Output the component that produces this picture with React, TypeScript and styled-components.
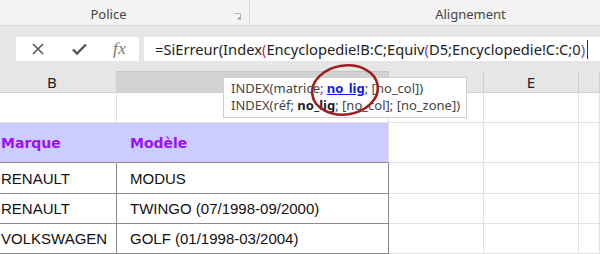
import styled, { createGlobalStyle } from "styled-components";

const GlobalStyle = createGlobalStyle`
  html, body {
    margin: 0;
    padding: 0;
    background: #ffffff;
  }
  body {
    font-family: "Noto Sans", "Open Sans", sans-serif;
  }
`;

const Page = styled.div`
  position: relative;
  width: 600px;
  height: 254px;
  overflow: hidden;
  display: flex;
  flex-direction: column;
`;

const Ribbon = styled.div`
  height: 27px;
  background: #f3f3f3;
  border-bottom: 1px solid #d6d6d6;
  display: grid;
  grid-template-columns: 249px 1px 1fr;
`;

const Group = styled.div<{ $left?: number; $right?: number }>`
  position: relative;
  display: flex;
  align-items: flex-end;
  justify-content: center;
  padding-bottom: 0;
  padding-left: ${(p) => p.$left ?? 0}px;
  padding-right: ${(p) => p.$right ?? 0}px;
  font-size: 13px;
  line-height: 22px;
  color: #444;
`;

const GroupDivider = styled.div`
  background: #d8d8d8;
`;

const Launcher = styled.svg`
  position: absolute;
  right: 7px;
  bottom: 4px;
`;

const FormulaArea = styled.div`
  height: 47px;
  background: #e6e6e6;
  display: flex;
  align-items: flex-start;
  padding: 11px 0 0 16px;
  box-sizing: border-box;
  gap: 5px;
`;

const ButtonBox = styled.div`
  width: 123px;
  height: 24px;
  background: #fff;
  display: flex;
  align-items: center;
  padding-left: 16px;
  gap: 28px;
  box-sizing: border-box;
`;

const FxLabel = styled.span`
  font-family: "Liberation Serif", serif;
  font-style: italic;
  font-size: 17px;
  color: #777;
  letter-spacing: 0.5px;
  margin-left: -2px;
`;

const FormulaInput = styled.div`
  flex: 1;
  height: 24px;
  background: #fff;
  display: flex;
  align-items: center;
  padding-left: 11px;
  font-size: 14.7px;
  color: #222;
  white-space: nowrap;
`;

const Paren = styled.span<{ $c: string }>`
  color: ${(p) => p.$c};
`;

const Caret = styled.span`
  display: inline-block;
  width: 1px;
  height: 19px;
  background: #333;
  margin-left: 2px;
`;

const COLS = "117px 272px 95px 95px 1fr";

const HeaderRow = styled.div`
  display: grid;
  grid-template-columns: ${COLS};
  height: 21px;
  background: #e6e6e6;
  border-bottom: 1px solid #cfcfcf;
`;

const ColHead = styled.div<{ $selected?: boolean; $nudge?: number }>`
  display: flex;
  align-items: center;
  justify-content: center;
  padding-right: ${(p) => p.$nudge ?? 0}px;
  font-size: 15px;
  color: #222;
  background: ${(p) => (p.$selected ? "#d2d2d2" : "transparent")};
  border-right: 1px solid #cdcdcd;
  border-top: ${(p) => (p.$selected ? "1px solid #c4c4c4" : "none")};
`;

const Sheet = styled.div`
  display: grid;
  grid-template-columns: ${COLS};
  grid-template-rows: 30px 40px 31px 30px 30px;
`;

type CellKind = "blank" | "head" | "data";

const Cell = styled.div<{ $kind: CellKind; $edge?: boolean; $first?: boolean }>`
  display: flex;
  align-items: center;
  padding-left: ${(p) => (p.$first ? "1px" : "13px")};
  white-space: nowrap;
  overflow: hidden;
  box-sizing: border-box;
  font-family: ${(p) =>
    p.$kind === "head" ? '"DejaVu Sans", sans-serif' : '"Liberation Sans", Arial, sans-serif'};
  font-size: ${(p) => (p.$kind === "head" ? "14px" : "15px")};
  font-weight: ${(p) => (p.$kind === "head" ? 700 : 400)};
  color: ${(p) => (p.$kind === "head" ? "#9b10ff" : "#111")};
  background: ${(p) => (p.$kind === "head" ? "#ccccff" : "#fff")};
  border-bottom: 1px solid
    ${(p) => (p.$kind === "blank" ? "#e2e2e2" : "#8a8a8a")};
  border-right: 1px solid
    ${(p) =>
      p.$kind === "data" ? "#8a8a8a" : p.$kind === "head" && !p.$edge ? "#ccccff" : "#e2e2e2"};
`;

const Tooltip = styled.div`
  position: absolute;
  left: 223px;
  top: 77px;
  width: 244px;
  height: 41px;
  box-sizing: border-box;
  background: #fff;
  border: 1px solid #d0d0d0;
  padding: 2px 0 0 7px;
  font-size: 13px;
  line-height: 17px;
  color: #444;
  white-space: nowrap;
`;

const ActiveArg = styled.a`
  color: #0b1cf0;
  font-weight: 700;
  text-decoration: underline;
`;

const BoldArg = styled.b`
  color: #222;
`;

const Circle = styled.svg`
  position: absolute;
  left: 308px;
  top: 62px;
  pointer-events: none;
`;

const HEADS = ["B", "C", "D", "E", ""];

const ROWS: [string, string][] = [
  ["RENAULT", "MODUS"],
  ["RENAULT", "TWINGO (07/1998-09/2000)"],
  ["VOLKSWAGEN", "GOLF (01/1998-03/2004)"],
];

function Blanks() {
  return (
    <>
      <Cell $kind="blank" />
      <Cell $kind="blank" />
      <Cell $kind="blank" />
    </>
  );
}

function RowCells({ marque, modele }: { marque: string; modele: string }) {
  return (
    <>
      <Cell $kind="data" $first>{marque}</Cell>
      <Cell $kind="data">{modele}</Cell>
      <Blanks />
    </>
  );
}

export default function App() {
  return (
    <Page>
      <GlobalStyle />
      <Ribbon>
        <Group $right={32}>
          Police
          <Launcher width="8" height="8" viewBox="0 0 8 8">
            <path d="M0.5 0.5h6v6" fill="none" stroke="#b5b5b5" />
            <path d="M3 6.5l3.5-3.5v3.5z" fill="#999" />
          </Launcher>
        </Group>
        <GroupDivider />
        <Group $left={91}>Alignement</Group>
      </Ribbon>

      <FormulaArea>
        <ButtonBox>
          <svg width="12" height="12" viewBox="0 0 12 12">
            <path d="M1 1l10 10M11 1L1 11" stroke="#555" strokeWidth="1.6" />
          </svg>
          <svg width="15" height="12" viewBox="0 0 15 12">
            <path d="M1 6.5l4 4L14 1.5" fill="none" stroke="#555" strokeWidth="2.4" />
          </svg>
          <FxLabel>fx</FxLabel>
        </ButtonBox>
        <FormulaInput>
          =SiErreur(Index<Paren $c="#e0182d">(</Paren>Encyclopedie!B:C;Equiv
          <Paren $c="#7a3fd0">(</Paren>D5;Encyclopedie!C:C;0<Paren $c="#7a3fd0">)</Paren>
          <Caret />
        </FormulaInput>
      </FormulaArea>

      <HeaderRow>
        {HEADS.map((h, i) => (
          <ColHead key={i} $selected={h === "C"} $nudge={h === "B" ? 12 : 0}>
            {h}
          </ColHead>
        ))}
      </HeaderRow>

      <Sheet>
        <Cell $kind="blank" />
        <Cell $kind="blank" />
        <Blanks />

        <Cell $kind="head" $first>Marque</Cell>
        <Cell $kind="head" $edge>Modèle</Cell>
        <Blanks />

        {ROWS.map(([marque, modele], i) => (
          <RowCells key={i} marque={marque} modele={modele} />
        ))}
      </Sheet>

      <Tooltip>
        <div>
          INDEX(matrice; <ActiveArg>no_lig</ActiveArg>; [no_col])
        </div>
        <div>
          INDEX(réf; <BoldArg>no_lig</BoldArg>; [no_col]; [no_zone])
        </div>
      </Tooltip>

      <Circle width="74" height="58" viewBox="0 0 74 58">
        <ellipse
          cx="37"
          cy="28"
          rx="33"
          ry="24.5"
          transform="rotate(-8 37 28)"
          fill="none"
          stroke="#9e1f22"
          strokeWidth="2.6"
        />
      </Circle>
    </Page>
  );
}
